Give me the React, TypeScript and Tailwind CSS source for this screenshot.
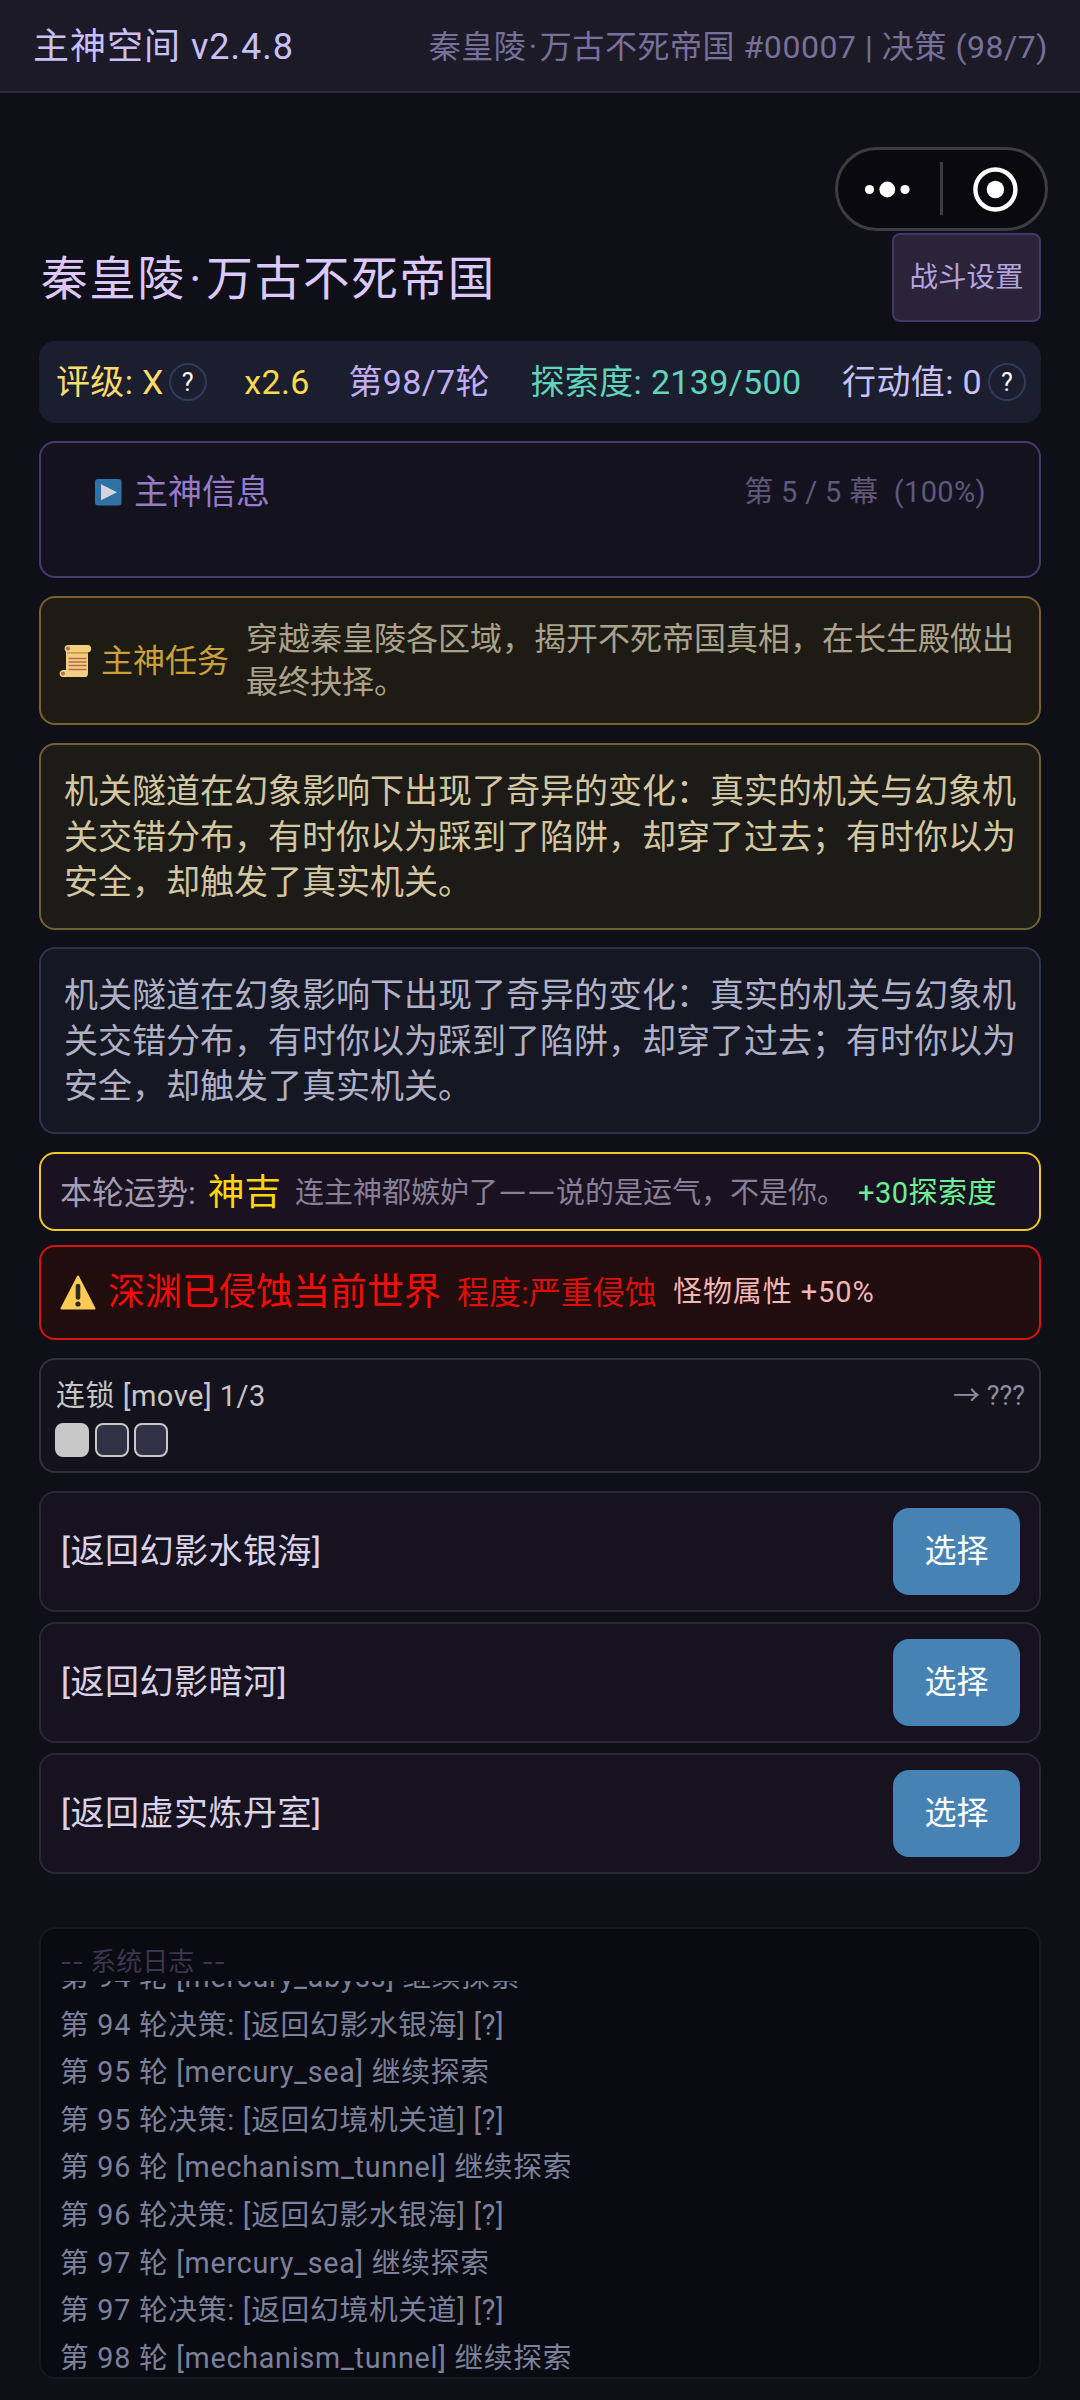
import type { ReactNode } from "react";
import clsx from "clsx";

const story =
  "机关隧道在幻象影响下出现了奇异的变化：真实的机关与幻象机关交错分布，有时你以为踩到了陷阱，却穿了过去；有时你以为安全，却触发了真实机关。";

const choices = ["[返回幻影水银海]", "[返回幻影暗河]", "[返回虚实炼丹室]"];

const logs = [
  "第 94 轮 [mercury_abyss] 继续探索",
  "第 94 轮决策: [返回幻影水银海] [?]",
  "第 95 轮 [mercury_sea] 继续探索",
  "第 95 轮决策: [返回幻境机关道] [?]",
  "第 96 轮 [mechanism_tunnel] 继续探索",
  "第 96 轮决策: [返回幻影水银海] [?]",
  "第 97 轮 [mercury_sea] 继续探索",
  "第 97 轮决策: [返回幻境机关道] [?]",
  "第 98 轮 [mechanism_tunnel] 继续探索",
];

/** Bordered box used for every block of the page. */
const Panel = ({ className, children }: { className: string; children: ReactNode }) => (
  <section className={clsx("box-border flex w-full shrink-0 rounded-2xl border-2", className)}>
    {children}
  </section>
);

/** World name, with a bit of air around the middle dot. */
const WorldName = () => (
  <>
    秦皇陵<span className="mx-[0.07em]">·</span>万古不死帝国
  </>
);

const HelpBadge = () => (
  <span className="flex size-[38px] items-center justify-center rounded-full border-2 border-[#303a5c] text-[25px] text-white leading-none">
    ?
  </span>
);

const PlayIcon = () => (
  <svg className="size-[27px]" viewBox="0 0 27 27" aria-hidden="true">
    <rect width="26.5" height="26.5" rx="3" fill="#2f72a6" />
    <path d="M6 5.2v16L22 13.2z" fill="#d5d5d8" />
  </svg>
);

const ScrollIcon = () => (
  <svg className="h-[34px] w-[33px] shrink-0" viewBox="0 0 33 34" aria-hidden="true">
    <path
      d="M9 1h20c4 0 4.5 7 0 7.5V28c0 3-.5 5-3 5H4c-4.5 0-4.5-6.500 0-7h3V8C4.5 5 5.5 1 9 1z"
      fill="#f0cf80"
    />
    <path d="M8 8h21v1.8H8z" fill="#d59a45" />
    <circle cx="9" cy="4.5" r="2" fill="#b5695a" />
    <circle cx="4" cy="29.5" r="2" fill="#b5695a" />
    <path d="M9.5 14.5h18M9.5 18h18M9.5 21.5h18M9.5 25.5h18" stroke="#b96a4c" strokeWidth="1.7" />
  </svg>
);

const WarningIcon = () => (
  <svg className="h-[36px] w-[36px] shrink-0" viewBox="0 0 36 36" aria-hidden="true">
    <path d="M18 1.5L34.500 33.5H1.5z" fill="#fccb56" stroke="#fccb56" strokeWidth="2" strokeLinejoin="round" />
    <path d="M18 11v11.500" stroke="#2c2a28" strokeWidth="4.6" strokeLinecap="round" />
    <circle cx="18" cy="29" r="2.6" fill="#2c2a28" />
  </svg>
);

const App = () => (
  <div className="flex h-[2400px] w-[1080px] flex-col overflow-hidden bg-[#0f0f18] font-['Roboto','Noto_Sans_CJK_SC',sans-serif] text-white">
    <header className="flex h-[93px] shrink-0 items-center justify-between border-[#2b2a3d] border-b-2 bg-[#1b1a26] pt-[2px] pr-[32px] pl-[33px] leading-none">
      <span className="text-[36px] text-[#c9c0f8] tracking-[1px]">主神空间 v2.4.8</span>
      <span className="text-[#77709a] text-[32px] tracking-[0.55px]">
        <WorldName /> #00007 | 决策 (98/7)
      </span>
    </header>

    <main className="flex flex-col px-[39px]">
      {/* Floating menu capsule */}
      <div className="mt-[54px] -mr-[7px] flex h-[84px] w-[213px] items-center self-end rounded-full border-[3px] border-[#3c3c41] bg-[#09090e]">
        <svg className="h-[78px] w-[207px]" viewBox="0 0 207 78" fill="#fff" aria-hidden="true">
          <circle cx="31.5" cy="39.5" r="4.6" />
          <circle cx="49.3" cy="39.5" r="7.9" />
          <circle cx="67" cy="39.5" r="4.6" />
          <path d="M102 12h3v53h-3z" fill="#3c3c41" />
          <circle cx="157.4" cy="39.5" r="20" fill="none" stroke="#fff" strokeWidth="4.4" />
          <circle cx="157.4" cy="39.5" r="8.7" />
        </svg>
      </div>

      <div className="mt-[2px] flex h-[89px] items-center justify-between">
        <h1 className="pt-[3px] pl-[2px] text-[#dcc8fb] text-[46.5px] leading-none tracking-[1.8px]">
          <WorldName />
        </h1>
        <button
          type="button"
          className="h-[89px] w-[149px] rounded-lg border-2 border-[#43376a] bg-[#2a2339] pt-[2px] text-[#b3a4de] text-[28.5px] leading-none"
        >
          战斗设置
        </button>
      </div>

      {/* Round stats */}
      <div className="mt-[19px] flex h-[82px] items-center justify-between rounded-2xl bg-[#1b1e2e] pr-[15px] pl-[17px] text-[34px] leading-none tracking-[0.35px]">
        <span className="flex items-center gap-[5px] text-[#fbdb6a]">
          评级: X<HelpBadge />
        </span>
        <span className="-ml-[3px] text-[#fbd84e]">x2.6</span>
        <span className="-ml-[2px] text-[#c3adf5]">第98/7轮</span>
        <span className="text-[#62d4bc]">探索度: 2139/500</span>
        <span className="flex items-center gap-[6px] text-[#c8c1f5]">
          行动值: 0<HelpBadge />
        </span>
      </div>

      <Panel className="mt-[18px] h-[137px] items-start justify-between border-[#48396f] bg-[#14121f] pt-[30px] pr-[53px] pl-[54px] leading-[38px]">
        <span className="flex items-center gap-[12px] text-[#957bc8] text-[34px]">
          <PlayIcon />
          主神信息
        </span>
        <span className="whitespace-pre text-[#605779] text-[29px] tracking-[0.35px]">
          第 5 / 5 幕  (100%)
        </span>
      </Panel>

      <Panel className="mt-[18px] h-[129px] items-center border-[#7a602d] bg-[#1e1b14] pl-[18px]">
        <ScrollIcon />
        <span className="ml-[9px] w-[145px] shrink-0 text-[#c9a03a] text-[32px]">主神任务</span>
        <p className="w-[780px] pt-px text-[#aba28b] text-[32px] leading-[43px]">
          穿越秦皇陵各区域，揭开不死帝国真相，在长生殿做出最终抉择。
        </p>
      </Panel>

      <Panel className="mt-[18px] h-[187px] items-center border-[#70602f] bg-[#1c1b18] pl-[23px]">
        <p className="w-[956px] shrink-0 pt-[2px] text-[#d2c7a0] text-[34px] leading-[45.6px]">{story}</p>
      </Panel>

      <Panel className="mt-[17px] h-[187px] items-center border-[#2f334e] bg-[#151723] pl-[23px]">
        <p className="w-[956px] shrink-0 pt-[2px] text-[#b0b0c6] text-[34px] leading-[45.6px]">{story}</p>
      </Panel>

      <Panel className="mt-[18px] h-[79px] items-center whitespace-nowrap border-[#efc91f] bg-[#1a1220] pt-[3px] pl-[19px] leading-none">
        <span className="w-[148px] text-[#a49db2] text-[32px]">本轮运势:</span>
        <span className="w-[87px] text-[#ffd60a] text-[36.5px]">神吉</span>
        <span className="w-[563px] text-[#878097] text-[29px]">
          连主神都嫉妒了
          <span className="inline-block w-[58px] origin-left scale-x-[1.27]">——</span>
          说的是运气，不是你。
        </span>
        <span className="text-[#6bf093] text-[29px] tracking-[0.5px]">+30探索度</span>
      </Panel>

      <Panel className="mt-[14px] h-[95px] items-center whitespace-nowrap border-[#d61212] bg-[#210c0e] pl-[19px] leading-none">
        <WarningIcon />
        <span className="ml-[12px] w-[349px] text-[#f40d08] text-[37px]">深渊已侵蚀当前世界</span>
        <span className="w-[216px] text-[#dc0f0c] text-[32px]">程度:严重侵蚀</span>
        <span className="text-[#f3b6b2] text-[29px] tracking-[0.9px]">怪物属性 +50%</span>
      </Panel>

      <Panel className="mt-[18px] h-[115px] flex-col border-[#31303f] bg-[#14121c] px-[14px] pt-[19px] leading-none">
        <div className="flex h-[34px] items-center justify-between">
          <span className="pl-px text-[#c6c6c8] text-[29px] tracking-[0.5px]">连锁 [move] 1/3</span>
          <span className="text-[#8e8d9c] text-[27px]">→ ???</span>
        </div>
        <div className="mt-[10px] flex gap-[5.5px]">
          <i className="size-[34px] rounded-lg border-2 border-[#c8c8c8] bg-[#c8c8c8]" />
          <i className="size-[34px] rounded-lg border-2 border-[#c8c8c8] bg-[#323044]" />
          <i className="size-[34px] rounded-lg border-2 border-[#c8c8c8] bg-[#323044]" />
        </div>
      </Panel>

      <div className="mt-[18px] flex flex-col gap-[10px]">
        {choices.map(choice => (
          <Panel
            key={choice}
            className="h-[121px] items-center justify-between border-[#2b2739] bg-[#17121f] pr-[19px] pl-[20px]"
          >
            <span className="pb-[2px] text-[#d9d2e8] text-[34px] leading-none tracking-[0.5px]">{choice}</span>
            <button
              type="button"
              className="h-[87px] w-[127px] rounded-2xl bg-[#4682b4] pb-px text-[32px] text-white leading-none"
            >
              选择
            </button>
          </Panel>
        ))}
      </div>

      {/* System log, scrolled to the bottom */}
      <Panel className="mt-[53px] h-[452px] flex-col overflow-hidden border-[#171722] bg-[#0a0a12] px-[19px]">
        <div className="h-[52px] shrink-0 pt-[20px] text-[#3b354e] text-[26px] leading-[26px]">
          <span className="font-['Inter',sans-serif]">--</span> 系统日志{" "}
          <span className="ml-px font-['Inter',sans-serif]">--</span>
        </div>
        <div className="overflow-hidden">
          <ul className="-mt-[27px] text-[#7c819b] text-[28.7px] leading-[47.6px] tracking-[0.75px]">
            {logs.map(line => (
              <li key={line}>{line}</li>
            ))}
          </ul>
        </div>
      </Panel>
    </main>
  </div>
);

export default App;
